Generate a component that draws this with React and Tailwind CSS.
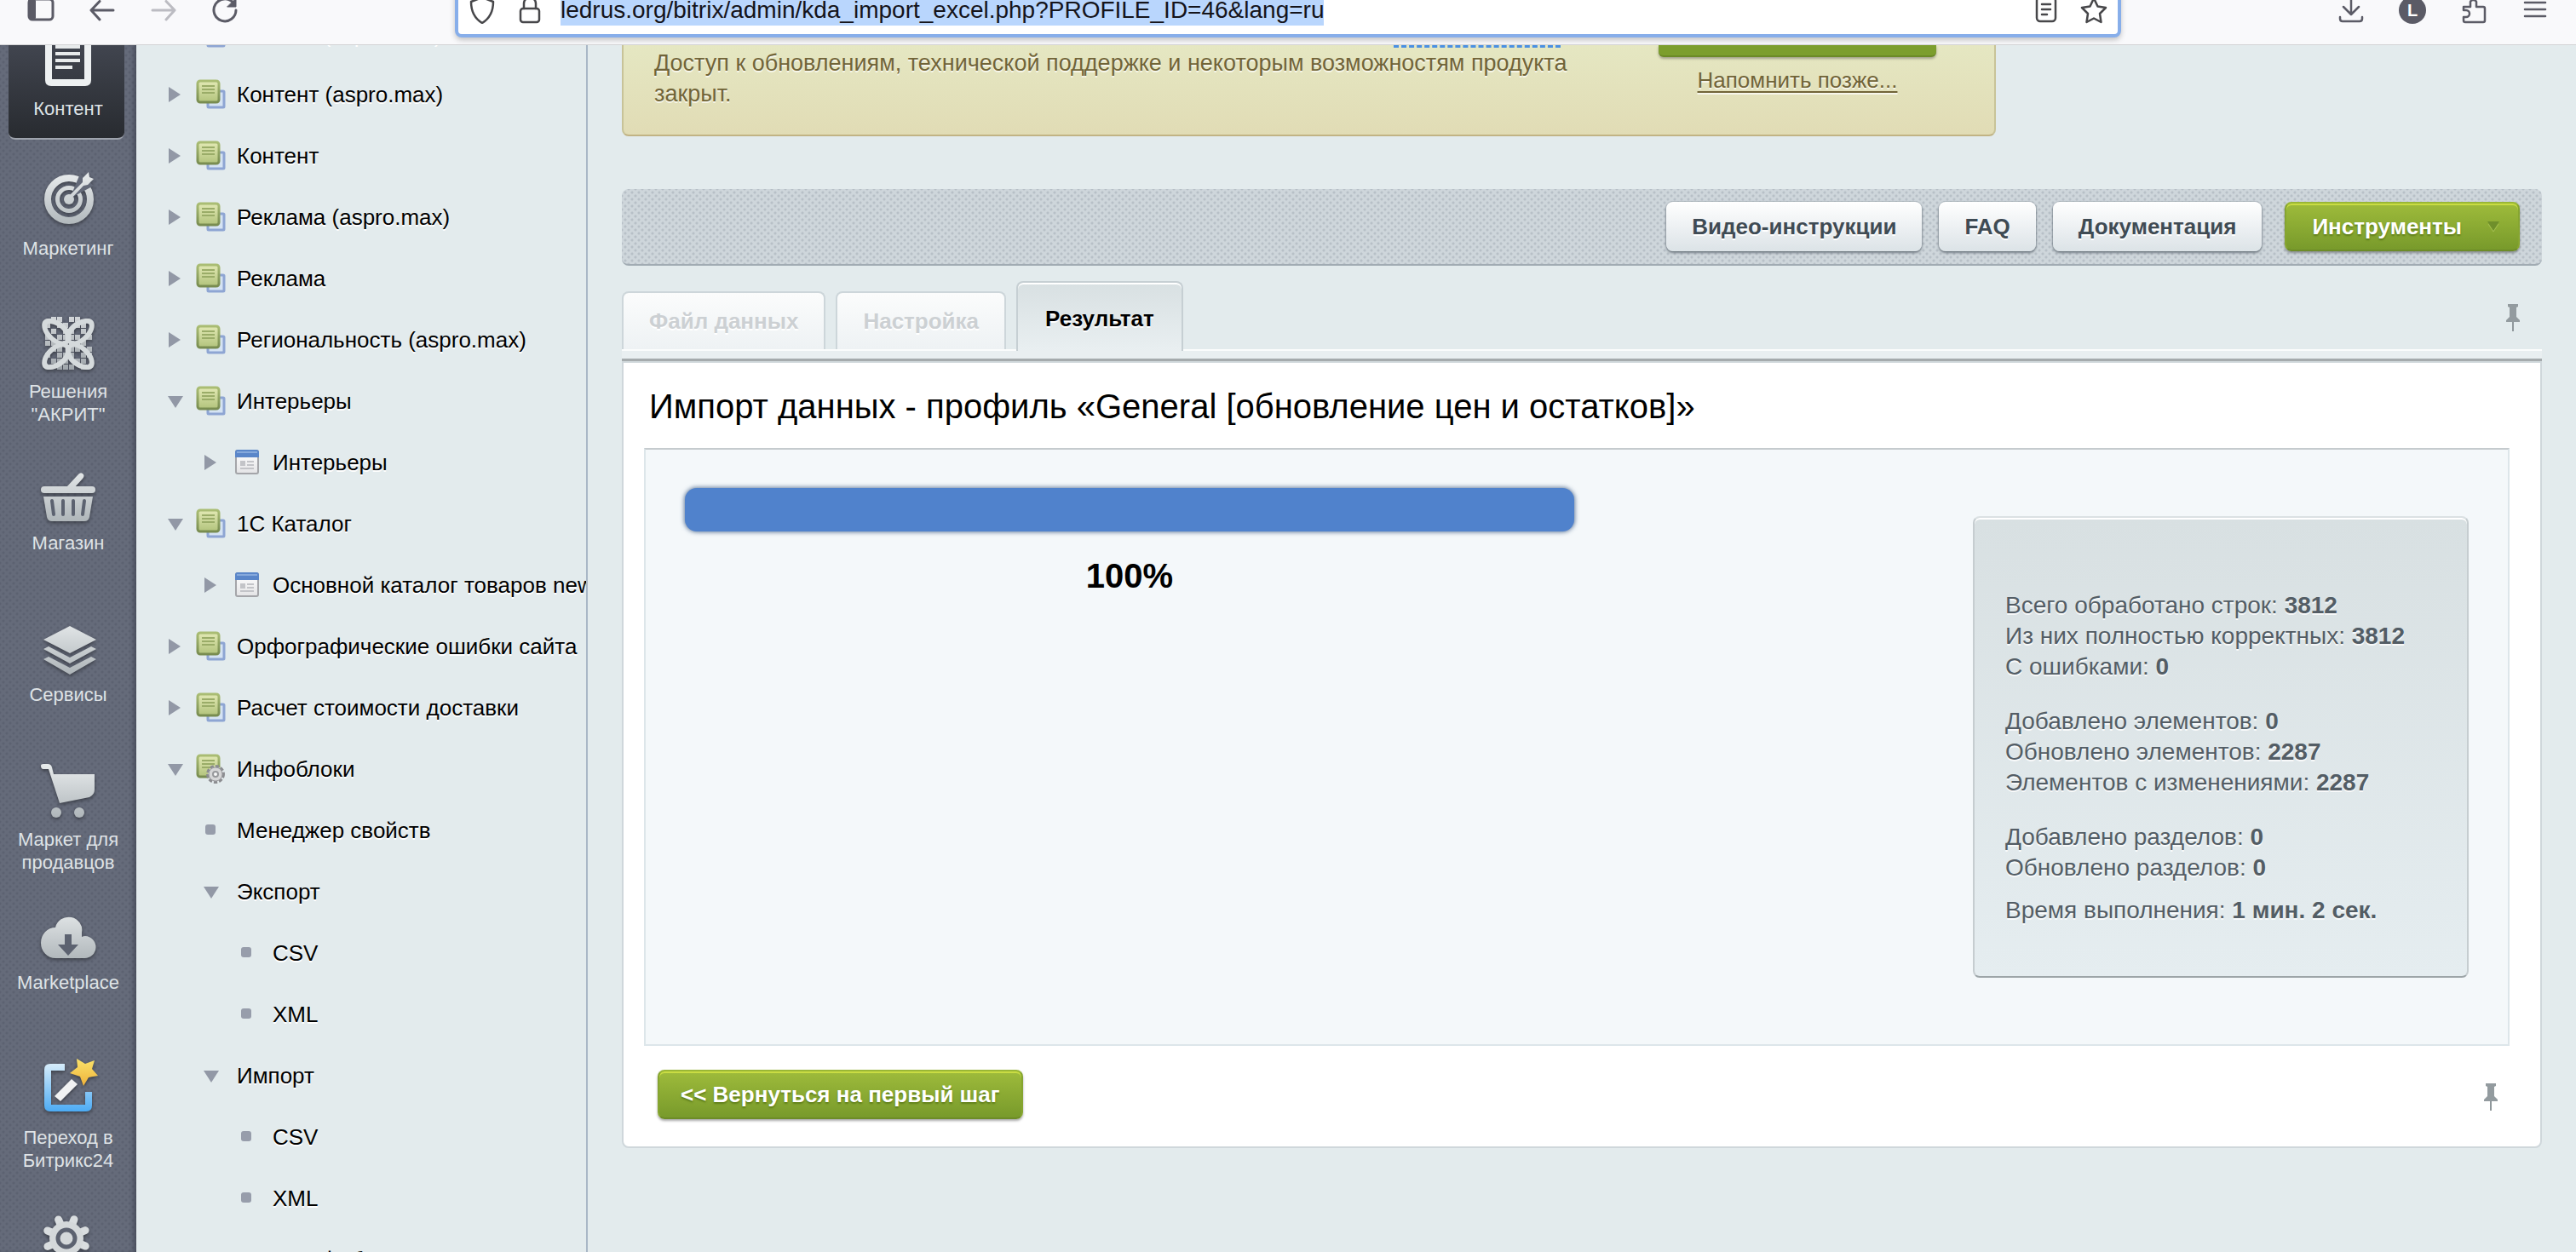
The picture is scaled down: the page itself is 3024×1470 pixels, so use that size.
import React from "react";

const Defs = () => (
  <svg width="0" height="0" className="absolute" aria-hidden="true">
    <defs>
      <linearGradient id="metal" x1="0" y1="0" x2="0" y2="72" gradientUnits="userSpaceOnUse">
        <stop offset="0" stopColor="#eef1f2" />
        <stop offset="1" stopColor="#adb4b8" />
      </linearGradient>
      <linearGradient id="page" x1="0" y1="0" x2="0" y2="1">
        <stop offset="0" stopColor="#e2e9b4" />
        <stop offset="1" stopColor="#b2c37c" />
      </linearGradient>
      <linearGradient id="pageEdge" x1="0" y1="0" x2="0" y2="1">
        <stop offset="0" stopColor="#aabd74" />
        <stop offset="1" stopColor="#788c50" />
      </linearGradient>
      <linearGradient id="sheet" x1="0" y1="0" x2="0" y2="1">
        <stop offset="0" stopColor="#ffffff" />
        <stop offset="1" stopColor="#e4e4e6" />
      </linearGradient>
      <linearGradient id="sky" x1="0" y1="8" x2="0" y2="66" gradientUnits="userSpaceOnUse">
        <stop offset="0" stopColor="#d9eefb" />
        <stop offset="1" stopColor="#4aaaf4" />
      </linearGradient>
      <linearGradient id="gold" x1="0" y1="0" x2="0" y2="1">
        <stop offset="0" stopColor="#fbe36b" />
        <stop offset="1" stopColor="#efb23a" />
      </linearGradient>
    </defs>
  </svg>
);

/* ---------- browser bar icons ---------- */

const Line = ({ children, color = "#5b5b66", width = 3 }) => (
  <svg viewBox="0 0 32 32" className="size-8 shrink-0" fill="none" stroke={color} strokeWidth={width} strokeLinecap="round" strokeLinejoin="round" aria-hidden="true">
    {children}
  </svg>
);

const IconButton = ({ label, children }) => (
  <button type="button" aria-label={label} className="block size-8 shrink-0">
    {children}
  </button>
);

function BrowserBar() {
  return (
    <header className="h-[53px] shrink-0 overflow-hidden border-b border-[#d3d3d6] bg-[#f9f9fb]">
      <div className="-mt-[26px] flex h-[76px] items-center">
        <div className="flex w-[534px] shrink-0 gap-10 pl-8">
          <IconButton label="Боковая панель">
            <Line>
              <rect x="2" y="3" width="28" height="24" rx="4" />
              <path d="M2 5h7v20H3z" fill="#5b5b66" strokeWidth="2" />
            </Line>
          </IconButton>
          <IconButton label="Назад">
            <Line><path d="M29 16H3M13 5.500 3 16l10 11" /></Line>
          </IconButton>
          <IconButton label="Вперёд">
            <Line color="#bcbcc2"><path d="M3 16h26M19 5.500 29 16 19 27" /></Line>
          </IconButton>
          <IconButton label="Обновить">
            <Line>
              <path d="M29 16a13 13 0 1 1-3.500-9" />
              <path d="M29 2v10H19z" fill="#5b5b66" strokeWidth="1" />
            </Line>
          </IconButton>
        </div>
        <div className="flex h-16 min-w-0 flex-1 items-center gap-6 rounded-lg border-4 border-[#87aeea] bg-white px-3 shadow-[0_3px_6px_rgba(0,0,0,0.22)]">
          <Line color="#47474a" width={2.5}>
            <path d="M16 1 29 6c0 10-3 19-13 25C6 25 3 16 3 6z" />
          </Line>
          <Line color="#47474a" width={2.5}>
            <rect x="5" y="14" width="22" height="16" rx="3" />
            <path d="M9 14V8a7 7 0 0 1 14 0v6" />
          </Line>
          <div className="-ml-1 flex min-w-0 flex-1">
            <input
              type="text"
              aria-label="Адрес"
              readOnly
              value="ledrus.org/bitrix/admin/kda_import_excel.php?PROFILE_ID=46&lang=ru"
              className="h-9 max-w-full bg-[#b9d6fd] text-[28px] leading-9 text-[#15141a] outline-none [field-sizing:content]"
            />
          </div>
          <IconButton label="Режим чтения">
            <Line color="#47474a" width={2.5}>
              <rect x="5" y="1" width="22" height="28" rx="4" />
              <path d="M11 9h10M11 15h10M11 21h6" />
            </Line>
          </IconButton>
          <IconButton label="Добавить в закладки">
            <Line color="#47474a" width={2.5}>
              <path d="m16 2 4.500 9.500L30 13l-7 7 1.500 10L16 25.500 7.500 30 9 20l-7-7 9.500-1.500z" />
            </Line>
          </IconButton>
        </div>
        <div className="flex w-[534px] shrink-0 justify-end gap-10 pr-8">
          <IconButton label="Загрузки">
            <Line width={2.5}><path d="M16 2v18M7 12l9 9 9-9M3 24v2q0 3 3 3h20q3 0 3-3v-2" /></Line>
          </IconButton>
          <button type="button" aria-label="Профиль" className="grid size-8 place-items-center rounded-full bg-[#5b5b66] text-xl font-bold text-white">
            L
          </button>
          <IconButton label="Расширения">
            <Line width={2.5}>
              <path d="M4 12h8V6a4 4 0 0 1 7 0v6h8q2 0 2 2v14q0 2-2 2H6q-2 0-2-2v-4h3a4 4 0 0 0 0-8H4z" />
            </Line>
          </IconButton>
          <IconButton label="Меню">
            <Line width={2.5}><path d="M4 7h24M4 15h24M4 23h24" /></Line>
          </IconButton>
        </div>
      </div>
    </header>
  );
}

/* ---------- left rail ---------- */

const RailSvg = ({ children }) => (
  <svg viewBox="0 0 160 72" className="block h-[72px] w-40 drop-shadow-[0_2px_2px_rgba(0,0,0,0.4)]" aria-hidden="true">
    {children}
  </svg>
);

const TargetIcon = () => (
  <RailSvg>
    <g fill="none" stroke="url(#metal)">
      <circle cx="81" cy="38" r="25" strokeWidth="8" />
      <circle cx="81" cy="38" r="13.500" strokeWidth="5" />
    </g>
    <circle cx="81" cy="38" r="6" fill="url(#metal)" />
    <path d="M82 37 94 8l16 14z" fill="#636978" />
    <path d="m79 36 18-18v-5l7-7 1 6 5 2-7 7-5 1-17 18z" fill="url(#metal)" />
  </RailSvg>
);

const GRID = [
  "01101100", "10110110", "01011010", "10111101", "11011010",
  "01101101", "10111011", "01110110", "00111010",
];

const KnotIcon = () => (
  <RailSvg>
    <g fill="url(#metal)" opacity="0.85">
      {GRID.map((row, y) =>
        [...row].map((c, x) => (c === "1" ? <rect key={`${x}-${y}`} x={53 + x * 7} y={8 + y * 7} width="6" height="6" /> : null))
      )}
    </g>
    <g fill="#d5dadc" fillRule="evenodd">
      {[[1, 1], [-1, 1], [1, -1], [-1, -1]].map(([sx, sy]) => (
        <path
          key={`${sx}${sy}`}
          transform={`translate(80 40) scale(${sx} ${sy})`}
          d="M-3-3C-6-18 10-31 24-30 33-29 32-18 27-11 20-1 8 6-3-3ZM3-5C8 0 18-8 22-14 26-20 26-25 21-24 11-23 1-13 3-5Z"
        />
      ))}
    </g>
  </RailSvg>
);

const BasketIcon = () => (
  <RailSvg>
    <g fill="url(#metal)">
      <path d="m78 30 13-14q3-4 6-2t0 6L86 32z" />
      <rect x="48" y="29" width="64" height="8" rx="4" />
      <path d="M51 41h58l-4 24q-1 5-6 5H61q-5 0-6-5z" />
    </g>
    <path d="m61 46 2 16M74 46v16M86 46v16M99 46l-2 16" stroke="#5c6270" strokeWidth="4" strokeLinecap="round" />
  </RailSvg>
);

const LayersIcon = () => (
  <RailSvg>
    <g fill="url(#metal)">
      <path d="m82 15 31 16-31 16-31-16z" />
      <path d="m51 42 6-3 25 13 25-13 6 3-31 17z" />
      <path d="m51 54 6-3 25 13 25-13 6 3-31 18z" />
    </g>
  </RailSvg>
);

const CartIcon = () => (
  <RailSvg>
    <g fill="url(#metal)">
      <path d="M48 9q0-2 3-2h5q4 0 5 4l2 8h48v18q0 6-6 9L70 53 57 13h-6q-3 0-3-4z" />
      <circle cx="66" cy="64" r="6" />
      <circle cx="93" cy="64" r="6" />
    </g>
  </RailSvg>
);

const CloudIcon = () => (
  <RailSvg>
    <path d="M65 67a17 18 0 1 1 0-36 15.500 15 0 0 1 31 6v5q2-1 4-1a13 13 0 0 1-1 26z" fill="url(#metal)" />
    <path d="M76 39h8v12h8L80 64 68 51h8z" fill="#5c6270" />
  </RailSvg>
);

const WandIcon = () => (
  <RailSvg>
    <path d="M76 13H59q-3 0-3 3v42q0 3 3 3h42q3 0 3-3V42" fill="none" stroke="url(#sky)" strokeWidth="8" />
    <path d="m64 47 20-20 7 6-20 20z" fill="#f1f2f3" />
    <path d="m90 3 10 6 11-4-3 10 7 8-11 2-6 10-4-11-12-4 9-7z" fill="url(#gold)" />
  </RailSvg>
);

const GearIcon = () => (
  <RailSvg>
    <g stroke="#d9dddf" strokeWidth="9" strokeLinecap="round">
      {[22, 67, 112, 157].map((a) => (
        <path key={a} d="M54 36h48" transform={`rotate(${a} 78 36)`} />
      ))}
    </g>
    <circle cx="78" cy="36" r="20" fill="#d4d8da" />
    <circle cx="78" cy="36" r="10" fill="#d4d8da" stroke="#5c6270" strokeWidth="5" />
  </RailSvg>
);

const RAIL = [
  { label: "Маркетинг", Icon: TargetIcon, gap: "mt-8" },
  { label: 'Решения "АКРИТ"', Icon: KnotIcon, gap: "mt-[57px]" },
  { label: "Магазин", Icon: BasketIcon, gap: "mt-10" },
  { label: "Сервисы", Icon: LayersIcon, gap: "mt-[67px]" },
  { label: "Маркет для продавцов", Icon: CartIcon, gap: "mt-[59px]" },
  { label: "Marketplace", Icon: CloudIcon, gap: "mt-[30px]" },
  { label: "Переход в Битрикс24", Icon: WandIcon, gap: "mt-[71px]" },
  { label: "", Icon: GearIcon, gap: "mt-10" },
];

function Rail() {
  return (
    <nav aria-label="Разделы" className="w-40 shrink-0 overflow-hidden bg-[#656b7a] bg-[radial-gradient(#5c6271_1px,transparent_2px),radial-gradient(#5c6271_1px,transparent_2px)] bg-[size:8px_8px] bg-[position:0_0,4px_4px] text-center text-[22px] leading-[27px] text-[#dfe3e6] shadow-[inset_-5px_0_5px_-2px_rgba(40,45,58,0.45)]">
      <a href="#content" className="mr-3.5 ml-2.5 flex h-[111px] flex-col items-center rounded-b-lg border-b-2 border-[#9ea3ad] bg-linear-to-b from-[#41454f] to-[#282b30]">
        <svg viewBox="0 0 54 51" className="mb-2.5 ml-1 block h-[51px] w-[54px] shrink-0" aria-hidden="true">
          <path d="M4-10V41q0 3 3 3h40q3 0 3-3V-10" fill="none" stroke="#edf0f1" strokeWidth="8" />
          <path d="M12 2h29M12 10h29M12 18h29M12 26h20" stroke="#e8ebec" strokeWidth="4" />
        </svg>
        <span className="ml-1">Контент</span>
      </a>
      {RAIL.map(({ label, Icon, gap }) => (
        <a key={label} href="#section" aria-label={label || "Настройки"} className={`block pb-0.5 ${gap}`}>
          <Icon />
          <span className="mx-auto mt-2.5 block w-36">{label}</span>
        </a>
      ))}
    </nav>
  );
}

/* ---------- tree ---------- */

const BlockIcon = ({ gear }) => (
  <svg viewBox="0 0 36 36" className="h-9 w-9 shrink-0" aria-hidden="true">
    {!gear && <rect x="14" y="14" width="19" height="19" rx="1" fill="#d5e3f3" stroke="#8ea5d3" strokeWidth="3" />}
    <rect x="2" y="2" width="25" height="25" rx="3" fill="url(#page)" stroke="url(#pageEdge)" strokeWidth="3" />
    <path d="M7 8h15M7 12h15M7 16h15" stroke="#9aac68" strokeWidth="2" />
    {gear && (
      <g>
        <circle cx="23" cy="24" r="9" fill="#d9d9da" stroke="#8b8c90" strokeWidth="4" strokeDasharray="4 2" />
        <circle cx="23" cy="24" r="8" fill="#d6d6d7" stroke="#9b9ca0" strokeWidth="1" />
        <circle cx="23" cy="24" r="3" fill="#f8f8f8" stroke="#97989b" strokeWidth="2" />
      </g>
    )}
  </svg>
);

const WindowIcon = () => (
  <svg viewBox="0 0 28 30" className="h-[30px] w-7 shrink-0" aria-hidden="true">
    <rect x="1" y="1" width="26" height="27" rx="2" fill="url(#sheet)" stroke="#a4a5a9" strokeWidth="2" />
    <path d="M0 9V3q0-3 3-3h22q3 0 3 3v6z" fill="#5a86c9" />
    <path d="M2 3h24" stroke="#86a9dc" strokeWidth="2" />
    <path d="M6 13h6v6H6zM14 13h8v2h-8zM14 17h8v2h-8zM6 21h16v2H6z" fill="#c3c4c8" />
  </svg>
);

const MARKS = {
  right: <path d="M2 1v18l14-9z" fill="#9298a6" />,
  down: <path d="M1 4h18l-9 14z" fill="#9298a6" />,
  dot: <rect x="3" y="3" width="12" height="12" rx="3" fill="#979dab" />,
};

const TREE = [
  { text: "Каталог (aspro.max)", mark: "right", level: 1, icon: "block" },
  { text: "Контент (aspro.max)", mark: "right", level: 1, icon: "block" },
  { text: "Контент", mark: "right", level: 1, icon: "block" },
  { text: "Реклама (aspro.max)", mark: "right", level: 1, icon: "block" },
  { text: "Реклама", mark: "right", level: 1, icon: "block" },
  { text: "Региональность (aspro.max)", mark: "right", level: 1, icon: "block" },
  { text: "Интерьеры", mark: "down", level: 1, icon: "block" },
  { text: "Интерьеры", mark: "right", level: 2, icon: "window" },
  { text: "1С Каталог", mark: "down", level: 1, icon: "block" },
  { text: "Основной каталог товаров new", mark: "right", level: 2, icon: "window" },
  { text: "Орфографические ошибки сайта", mark: "right", level: 1, icon: "block" },
  { text: "Расчет стоимости доставки", mark: "right", level: 1, icon: "block" },
  { text: "Инфоблоки", mark: "down", level: 1, icon: "gear" },
  { text: "Менеджер свойств", mark: "dot", level: 2 },
  { text: "Экспорт", mark: "down", level: 2 },
  { text: "CSV", mark: "dot", level: 3 },
  { text: "XML", mark: "dot", level: 3 },
  { text: "Импорт", mark: "down", level: 2 },
  { text: "CSV", mark: "dot", level: 3 },
  { text: "XML", mark: "dot", level: 3 },
  { text: "Типы инфоблоков", mark: "dot", level: 2 },
];

const INDENT = { 1: "pl-9", 2: "pl-[78px]", 3: "pl-[120px]" };

function Tree() {
  return (
    <aside className="w-[530px] shrink-0 overflow-hidden border-r-2 border-[#a9b7c6]">
      <ul className="-mt-[50px] text-[26px] leading-9 text-black [text-shadow:0_2px_0_#fff]">
        {TREE.map(({ text, mark, level, icon }, i) => (
          <li key={i} className={`flex h-[72px] items-center ${INDENT[level]}`}>
            <button type="button" aria-label={`Развернуть: ${text}`} className="size-5 shrink-0">
              <svg viewBox="0 0 20 20" className="block size-5" aria-hidden="true">{MARKS[mark]}</svg>
            </button>
            {(icon === "block" || icon === "gear") && <span className="mr-3 ml-3.5"><BlockIcon gear={icon === "gear"} /></span>}
            {icon === "window" && <span className="mr-4 ml-[18px]"><WindowIcon /></span>}
            <a href="#item" className={`whitespace-nowrap ${icon ? "" : "ml-5"}`}>{text}</a>
          </li>
        ))}
      </ul>
    </aside>
  );
}

/* ---------- main area ---------- */

const GREEN = "bg-linear-to-b from-[#9ebb3b] to-[#789a2b] text-white border-x-2 border-b-2 border-t-2 border-x-[#86a530] border-b-[#6d8c28] border-t-[#9ab735] shadow-[inset_0_2px_0_#c9dc43,0_2px_3px_rgba(0,0,0,0.35)] [text-shadow:0_2px_2px_rgba(70,100,10,0.6)]";
const LIGHT = "bg-linear-to-b from-white to-[#dce3e7] text-[#3f4b54] shadow-[0_2px_3px_rgba(60,70,80,0.6),0_0_1px_1px_rgba(130,140,150,0.35)] [text-shadow:0_2px_0_#fff]";

const Pin = () => (
  <svg viewBox="0 0 20 34" className="block h-[34px] w-5" aria-hidden="true">
    <path d="M4 1h12v3l-2 1v11l4 4v2H2v-2l4-4V5L4 4z" fill="#939b9f" />
    <path d="M10 22v11" stroke="#8f979b" strokeWidth="2" />
  </svg>
);

function Notice() {
  return (
    <section className="flex w-[1613px] items-start rounded-b-lg border-x-2 border-b-2 border-x-[#c8c398] border-b-[#c1b384] bg-linear-to-b from-[#e5e7c2] to-[#e1dcb5] pr-17 pb-[30px] pl-9 text-[27px] leading-9 text-[#716438] [text-shadow:0_2px_0_rgba(255,255,255,0.7)]">
      <div className="w-[1080px]">
        <div className="mr-4 ml-auto h-[3px] w-[196px] border-b-3 border-dashed border-[#4a90e2]" />
        <p>Доступ к обновлениям, технической поддержке и некоторым возможностям продукта закрыт.</p>
      </div>
      <div className="ml-auto flex w-[326px] flex-col items-center">
        <button type="button" aria-label="Продлить" className="h-3.5 w-full rounded-b-md border-b-2 border-[#6b8a26] bg-[#7c9e2d] shadow-[0_2px_3px_rgba(0,0,0,0.3)]" />
        <a href="#later" className="mt-[9px] text-[26px] whitespace-nowrap underline decoration-2 underline-offset-4">Напомнить позже...</a>
      </div>
    </section>
  );
}

function ActionBar() {
  const base = "h-[58px] rounded-lg whitespace-nowrap";
  return (
    <div className="mt-[62px] flex h-[90px] items-center justify-end rounded-lg border-b-2 border-[#a1abb3] bg-[#ced6db] bg-[radial-gradient(#b7c0c7_1px,transparent_2px),radial-gradient(#b7c0c7_1px,transparent_2px)] bg-[size:8px_8px] bg-[position:0_0,4px_4px] pr-[26px] text-[26px] font-bold">
      <button type="button" className={`${base} ${LIGHT} mr-5 px-[30px]`}>Видео-инструкции</button>
      <button type="button" className={`${base} ${LIGHT} mr-5 px-[30px]`}>FAQ</button>
      <button type="button" className={`${base} ${LIGHT} mr-[27px] px-[30px]`}>Документация</button>
      <button type="button" className={`${base} ${GREEN} flex items-center pr-[22px] pl-[30px]`}>
        Инструменты
        <svg viewBox="0 0 14 12" className="ml-[30px] h-3 w-3.5" aria-hidden="true">
          <path d="M0 0h14L7 11z" fill="#6f8f2b" />
          <path d="m1 3 6 9 6-9" fill="none" stroke="#a4bf52" />
        </svg>
      </button>
    </div>
  );
}

function Tabs() {
  const idle = "h-17 border-x-2 border-t-2 border-[#cdd6da] rounded-t-lg bg-linear-to-b from-[#fbfcfc] to-[#eef2f4] px-[30px] text-[#ccd0d3] [text-shadow:0_2px_0_#fff]";
  return (
    <div className="mt-[18px] flex h-20 items-end text-[26px] font-bold" role="tablist">
      <button type="button" role="tab" disabled className={`${idle} mr-3`}>Файл данных</button>
      <button type="button" role="tab" disabled className={`${idle} mr-3`}>Настройка</button>
      <button type="button" role="tab" aria-selected="true" className="relative -mb-0.5 h-[82px] rounded-t-lg border-x-2 border-t-2 border-[#c6cfd3] bg-linear-to-b from-[#d8e0e2] to-[#e9eff1] px-8 pt-1 text-black shadow-[inset_0_2px_0_#fff] [text-shadow:0_2px_0_#fff]">
        Результат
      </button>
      <button type="button" aria-label="Закрепить" className="mr-6 mb-5 ml-auto"><Pin /></button>
    </div>
  );
}

const STATS = [
  { gap: "", rows: [["Всего обработано строк:", "3812"], ["Из них полностью корректных:", "3812"], ["С ошибками:", "0"]] },
  { gap: "mt-7", rows: [["Добавлено элементов:", "0"], ["Обновлено элементов:", "2287"], ["Элементов с изменениями:", "2287"]] },
  { gap: "mt-7", rows: [["Добавлено разделов:", "0"], ["Обновлено разделов:", "0"]] },
  { gap: "mt-3.5", rows: [["Время выполнения:", "1 мин. 2 сек."]] },
];

function Result() {
  return (
    <section className="rounded-b-lg border-2 border-[#cfd7db] bg-white pt-[27px] pr-9 pb-8 pl-6">
      <h1 className="ml-1.5 text-[40px] leading-[48px] text-black">Импорт данных - профиль «General [обновление цен и остатков]»</h1>
      <div className="mt-[25px] flex min-h-[702px] items-start justify-between border-2 border-[#dde6ea] border-t-[#c5cbce] bg-[#f4f8fa] px-[46px] pt-[45px] pb-[78px]">
        <div className="w-[1044px]">
          <div role="progressbar" aria-label="Импорт" aria-valuenow={100} className="h-[51px] rounded-[14px] bg-[#5082cc] shadow-[0_0_5px_1px_rgba(60,90,130,0.75)]" />
          <p className="mt-7 text-center text-[40px] leading-[48px] font-bold text-black">100%</p>
        </div>
        <div className="mt-[33px] w-[582px] rounded-lg border-2 border-[#c6cdd0] border-t-[#dbe1e3] border-b-[#9da5a8] bg-linear-to-b from-[#d8e0e2] to-[#e5edf0] px-9 pt-[85px] pb-[59px] text-[28px] leading-9 text-[#535d65] shadow-[inset_0_2px_0_#fff] [text-shadow:0_2px_0_rgba(255,255,255,0.8)]">
          {STATS.map(({ gap, rows }, i) => (
            <div key={i} className={gap}>
              {rows.map(([k, v]) => (
                <p key={k} className="whitespace-nowrap">{k} <b>{v}</b></p>
              ))}
            </div>
          ))}
        </div>
      </div>
      <div className="mt-7 flex items-center justify-between pr-3 pl-4">
        <button type="button" className={`h-[58px] rounded-lg px-[25px] text-[26px] font-bold whitespace-nowrap ${GREEN}`}>&lt;&lt; Вернуться на первый шаг</button>
        <button type="button" aria-label="Закрепить" className="pt-1.5"><Pin /></button>
      </div>
    </section>
  );
}

export default function App() {
  return (
    <div className="flex h-screen flex-col overflow-hidden bg-[#e3ebed] font-['Liberation_Sans',Arial,sans-serif]">
      <Defs />
      <BrowserBar />
      <div className="flex min-h-0 flex-1">
        <Rail />
        <Tree />
        <main className="min-w-0 flex-1 overflow-hidden px-10">
          <Notice />
          <ActionBar />
          <Tabs />
          <div className="h-3.5 border-t-2 border-b-3 border-t-[#fbfcfc] border-b-[#a5abad] bg-[#e9eff1]" />
          <Result />
        </main>
      </div>
    </div>
  );
}
